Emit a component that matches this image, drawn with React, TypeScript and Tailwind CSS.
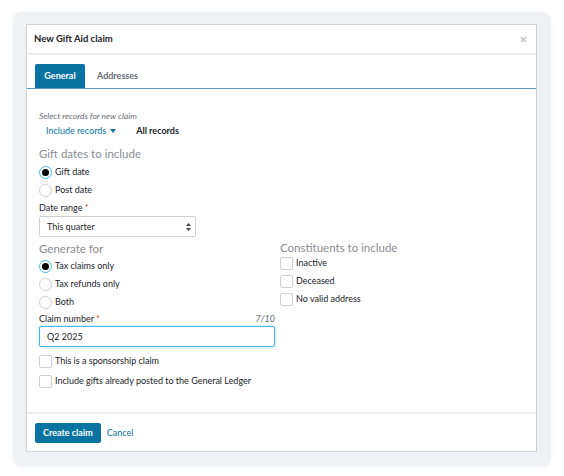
const font = { fontFamily: 'Lato, "Open Sans", sans-serif' }

function Radio({ label, checked }: { label: string; checked?: boolean }) {
  return (
    <label className="flex h-[18px] items-center gap-[3px]">
      <span
        className={
          checked
            ? 'flex h-[13px] w-[13px] items-center justify-center rounded-full border border-[#44b8ec] bg-white'
            : 'flex h-[13px] w-[13px] items-center justify-center rounded-full border border-[#cdcfd2] bg-white'
        }
      >
        {checked && <span className="h-[7px] w-[7px] rounded-full bg-black" />}
      </span>
      <span className="text-[9px] text-[#212327]">{label}</span>
    </label>
  )
}

function Checkbox({ label }: { label: string }) {
  return (
    <label className="flex h-[18px] items-center gap-[3px]">
      <span className="h-[13px] w-[13px] rounded-[2px] border border-[#cdcfd2] bg-white" />
      <span className="text-[9px] text-[#212327]">{label}</span>
    </label>
  )
}

export default function App() {
  return (
    <div className="h-[476px] w-[564px] bg-white pt-[12px] pl-[13px]" style={font}>
      <div className="h-[454px] w-[538px] rounded-[8px] bg-[#eef2f5] pt-[12px] pl-[13px] shadow-[0_1px_4px_rgba(0,0,0,0.06)]">
        <div className="flex h-[428px] w-[511px] flex-col border border-[#cfd3d7] bg-white">
          {/* Header */}
          <div className="flex h-[30px] shrink-0 items-center justify-between border-b-2 border-[#eceef0] pl-[7px] pr-[9px]">
            <span className="text-[9.5px] font-bold text-[#212327]">New Gift Aid claim</span>
            <svg width="7" height="7" viewBox="0 0 7 7">
              <path d="M1 1l5 5M6 1L1 6" stroke="#c4c7cb" strokeWidth="1.6" />
            </svg>
          </div>

          {/* Tabs */}
          <div className="flex h-[34px] shrink-0 items-end gap-[12px] border-b border-[#5a9cbd] pl-[8px]">
            <div className="flex h-[24px] w-[50px] items-center justify-center rounded-t-[2px] bg-[#0974a1] text-[9px] font-bold text-white">
              General
            </div>
            <div className="flex h-[24px] items-center text-[9px] font-bold text-[#686c73]">Addresses</div>
          </div>

          {/* Body */}
          <div className="flex-1 pl-[12px] pt-[21px]">
            <div className="text-[8.5px] italic leading-[12px] text-[#686c73]">Select records for new claim</div>
            <div className="flex h-[18px] items-center gap-[20px] pl-[7px]">
              <span className="flex items-center gap-[4px] text-[9px] text-[#0974a1]">
                Include records
                <svg width="6" height="4" viewBox="0 0 6 4">
                  <path d="M0 0h6L3 4z" fill="#0974a1" />
                </svg>
              </span>
              <span className="text-[9px] font-bold text-[#212327]">All records</span>
            </div>

            <div className="mt-[5px] text-[11.5px] leading-[18px] text-[#8a8d92]">Gift dates to include</div>
            <Radio label="Gift date" checked />
            <Radio label="Post date" />

            <div className="mt-[2px] text-[9px] leading-[14px] text-[#212327]">
              Date range <span className="text-[#c0392b]">*</span>
            </div>
            <div className="mt-[1px] flex h-[21px] w-[157px] items-center justify-between rounded-[2px] border border-[#cdcfd2] pl-[7px] pr-[4px] text-[9px] text-[#212327]">
              This quarter
              <svg width="5" height="8" viewBox="0 0 5 8">
                <path d="M2.5 0L5 3H0zM2.5 8L0 5h5z" fill="#444" />
              </svg>
            </div>

            <div className="mt-[3px] flex">
              <div className="w-[241px]">
                <div className="text-[11.5px] leading-[17px] text-[#8a8d92]">Generate for</div>
                <Radio label="Tax claims only" checked />
                <Radio label="Tax refunds only" />
                <Radio label="Both" />
                <div className="mt-[1px] flex w-[236px] items-center justify-between text-[9px] leading-[14px] text-[#212327]">
                  <span>
                    Claim number <span className="text-[#c0392b]">*</span>
                  </span>
                  <span className="italic text-[#686c73]">7/10</span>
                </div>
                <div className="flex h-[21px] w-[236px] items-center rounded-[2px] border border-[#44b8ec] pl-[7px] text-[9px] text-[#212327] shadow-[0_0_3px_rgba(68,184,236,0.5)]">
                  Q2 2025
                </div>
                <div className="mt-[5px] flex flex-col gap-[2px]">
                  <Checkbox label="This is a sponsorship claim" />
                  <Checkbox label="Include gifts already posted to the General Ledger" />
                </div>
              </div>
              <div className="pt-[2px]">
                <div className="text-[11.5px] leading-[12px] text-[#8a8d92]">Constituents to include</div>
                <Checkbox label="Inactive" />
                <Checkbox label="Deceased" />
                <Checkbox label="No valid address" />
              </div>
            </div>
          </div>

          {/* Footer */}
          <div className="flex h-[39px] shrink-0 items-center gap-[6px] border-t-2 border-[#eceef0] pl-[8px]">
            <button className="flex h-[20px] items-center rounded-[2px] bg-[#0974a1] px-[8px] text-[9px] font-bold text-white">
              Create claim
            </button>
            <span className="text-[9px] text-[#0974a1]">Cancel</span>
          </div>
        </div>
      </div>
    </div>
  )
}
